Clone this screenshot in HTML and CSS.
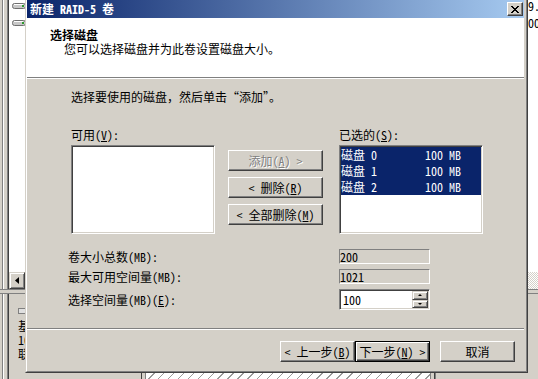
FILE: index.html
```html
<!DOCTYPE html>
<html lang="zh-CN">
<head>
<meta charset="utf-8">
<title>新建 RAID-5 卷</title>
<link rel="stylesheet" href="styles.css">
</head>
<body>
<div class="desk">
  <div class="bg-top">
    <div class="frame-left"></div>
    <div class="list">
      <div class="list-rows">
        <div class="row">
          <svg class="drive" viewBox="0 0 14 6" width="14" height="6"><rect x="0.5" y="0.5" width="13" height="5" rx="2" fill="#c8c8c8" stroke="#707070"/><rect x="2" y="1" width="9" height="1" fill="#fff"/><rect x="10" y="2" width="2" height="2" fill="#2e9a2e"/></svg>
          <span class="cell c1">9.76 GB</span>
        </div>
        <div class="row">
          <svg class="drive" viewBox="0 0 14 6" width="14" height="6"><rect x="0.5" y="0.5" width="13" height="5" rx="2" fill="#c8c8c8" stroke="#707070"/><rect x="2" y="1" width="9" height="1" fill="#fff"/><rect x="10" y="2" width="2" height="2" fill="#2e9a2e"/></svg>
          <span class="cell c2">100 %</span>
        </div>
      </div>
      <div class="hscroll">
        <div class="sb-btn"><svg width="4" height="7" viewBox="0 0 4 7"><path d="M4 0V7L0 3.5Z" fill="#000"/></svg></div>
        <div class="sb-track"></div>
      </div>
    </div>
  </div>
  <div class="splitter"></div>
  <div class="bg-bottom">
    <div class="frame-left"></div>
    <div class="disks">
      <div class="disk">
        <div class="disk-label">
          <svg class="disk-icon" viewBox="0 0 8 6" width="8" height="6"><rect x="0.5" y="0.5" width="7" height="5" fill="#e0e0e0" stroke="#808080"/></svg>
          <div class="dl-line">基本</div>
          <div class="dl-line">10.00 GB</div>
          <div class="dl-line">联机</div>
        </div>
        <div class="part hatch"></div>
        <div class="part rest"></div>
      </div>
    </div>
  </div>
</div>

<div class="dialog">
  <div class="dialog-inner">
    <div class="titlebar">
      <span class="title">新建 RAID-5 卷</span>
      <div class="close"><svg width="8" height="7" viewBox="0 0 8 7" shape-rendering="crispEdges"><path d="M0 0h2v1H0zM6 0h2v1H6zM1 1h2v1H1zM5 1h2v1H5zM2 2h4v1H2zM3 3h2v1H3zM2 4h4v1H2zM1 5h2v1H1zM5 5h2v1H5zM0 6h2v1H0zM6 6h2v1H6z" fill="#000"/></svg></div>
    </div>
    <div class="header">
      <div class="h-title">选择磁盘</div>
      <div class="h-sub">您可以选择磁盘并为此卷设置磁盘大小。</div>
    </div>
    <div class="sep"></div>
    <div class="body">
      <div class="instr">选择要使用的磁盘，然后单击“添加”。</div>
      <div class="pick">
        <div class="col-list">
          <div class="lbl">可用(<u>V</u>):</div>
          <div class="listbox"></div>
        </div>
        <div class="col-btns">
          <div class="btn mid disabled">添加(<u>A</u>) &gt;</div>
          <div class="btn mid">&lt; 删除(<u>R</u>)</div>
          <div class="btn mid">&lt; 全部删除(<u>M</u>)</div>
        </div>
        <div class="col-list sel">
          <div class="lbl">已选的(<u>S</u>):</div>
          <div class="listbox">
            <div class="item"><span>磁盘 0</span><span>100 MB</span></div>
            <div class="item"><span>磁盘 1</span><span>100 MB</span></div>
            <div class="item"><span>磁盘 2</span><span>100 MB</span></div>
          </div>
        </div>
      </div>
      <div class="sizes">
        <div class="slbl">卷大小总数(MB):</div>
        <div class="ro">200</div>
        <div class="slbl">最大可用空间量(MB):</div>
        <div class="ro">1021</div>
        <div class="slbl">选择空间量(MB)(<u>E</u>):</div>
        <div class="spin">
          <span class="spin-val">100</span>
          <div class="spin-btns">
            <div class="sbtn"><span class="tri up"></span></div>
            <div class="sbtn"><span class="tri down"></span></div>
          </div>
        </div>
      </div>
    </div>
    <div class="sep"></div>
    <div class="footer">
      <div class="btn wiz">&lt; 上一步(<u>B</u>)</div>
      <div class="btn wiz default">下一步(<u>N</u>) &gt;</div>
      <div class="btn wiz cancel">取消</div>
    </div>
  </div>
</div>
</body>
</html>
```

FILE: styles.css
```css
* { box-sizing: border-box; }
html, body { margin: 0; padding: 0; }
body {
  width: 538px;
  height: 379px;
  overflow: hidden;
  position: relative;
  background: #D4D0C8;
  font-family: "Noto Sans Mono CJK SC", "Noto Sans CJK SC", "Liberation Mono", monospace;
  font-size: 12px;
  line-height: 12px;
  color: #000;
}
u { text-decoration: underline; text-underline-offset: 1px; }

/* ---------- background window ---------- */
.desk { width: 538px; height: 379px; display: flex; flex-direction: column; }
.bg-top { height: 290px; display: flex; border-bottom: 1px solid #808080; flex: none; }
.frame-left {
  width: 9px; flex: none;
  background: linear-gradient(to right, #D4D0C8 0 2px, #808080 2px 3px, #fff 3px 4px, #D4D0C8 4px 7px, #808080 7px 8px, #404040 8px 9px);
}
.list { flex: 1; min-width: 0; display: flex; flex-direction: column; background: #fff; }
.list-rows { flex: 1; overflow: hidden; }
.row { display: flex; align-items: flex-start; height: 17px; white-space: nowrap; }
.drive { flex: none; margin: 3px 0 0 3px; }
.cell { flex: none; line-height: 12px; margin-top: 0; }
.c1 { margin-left: 502px; }
.c2 { margin-left: 496px; }
.hscroll { height: 17px; display: flex; flex: none; }
.sb-btn {
  width: 16px; height: 17px; flex: none;
  display: flex; align-items: center; justify-content: center;
  background: #D4D0C8;
  border: 1px solid; border-color: #D4D0C8 #404040 #404040 #D4D0C8;
  box-shadow: inset 1px 1px #fff, inset -1px -1px #808080;
}
.sb-track {
  flex: 1;
  background: conic-gradient(#D4D0C8 0 25%, #fff 0 50%, #D4D0C8 0 75%, #fff 0) 0 0 / 2px 2px;
}
.splitter { height: 3px; flex: none; }
.bg-bottom { flex: 1; display: flex; border-top: 1px solid #808080; min-height: 0; }
.disks { flex: 1; padding-top: 3px; overflow: hidden; }
.disk { display: flex; height: 110px; }
.disk-label { width: 132px; flex: none; padding: 11px 0 0 9px; }
.disk-icon { display: block; margin-bottom: 5px; }
.dl-line { line-height: 14px; white-space: nowrap; }
.part { height: 100%; }
.hatch {
  width: 294px; flex: none;
  border-left: 1px solid #404040; border-right: 1px solid #404040;
  box-shadow: inset 3px 0 #D4D0C8, inset -3px 0 #D4D0C8, inset 4px 0 #808080, inset -4px 0 #808080;
  background: repeating-linear-gradient(135deg, #fff 0 6px, #9a9a9a 6px 7px);
}
.rest { flex: 1; border-left: 1px solid #808080; }

/* ---------- dialog ---------- */
.dialog {
  position: absolute; left: 25px; top: 0;
  width: 503px; height: 373px;
  background: #D4D0C8;
  border-left: 1px solid #D4D0C8;
  border-right: 1px solid #404040;
  border-bottom: 1px solid #404040;
}
.dialog-inner {
  height: 100%;
  display: flex; flex-direction: column;
  border-left: 1px solid #fff;
  border-right: 1px solid #808080;
  border-bottom: 1px solid #808080;
  padding: 0 2px 2px 0;
}
.titlebar {
  height: 18px; flex: none;
  display: flex; align-items: center; justify-content: space-between;
  background: linear-gradient(to right, #0A246A, #A6CAF0);
  padding: 0 1px 0 3px;
}
.title { color: #fff; font-weight: bold; line-height: 18px; white-space: nowrap; }
.close {
  width: 16px; height: 14px;
  display: flex; align-items: center; justify-content: center;
  background: #D4D0C8;
  border: 1px solid; border-color: #fff #404040 #404040 #fff;
  box-shadow: inset -1px -1px #808080;
}
.header { height: 59px; flex: none; background: #fff; padding-top: 11px; }
.h-title { font-weight: bold; padding-left: 23px; line-height: 12px; }
.h-sub { padding-left: 37px; margin-top: 2px; line-height: 12px; }
.sep { height: 2px; flex: none; border-top: 1px solid #808080; border-bottom: 1px solid #fff; }

.body { flex: 1; padding: 12px 0 0 44px; display: flex; flex-direction: column; }
.instr { line-height: 12px; }
.pick { display: flex; margin-top: 26px; align-items: flex-start; }
.col-list { width: 144px; flex: none; display: flex; flex-direction: column; }
.col-list.sel { margin-left: 16px; }
.lbl { line-height: 12px; margin-bottom: 4px; white-space: nowrap; }
.listbox {
  height: 89px;
  background: #fff;
  border: 1px solid; border-color: #808080 #fff #fff #808080;
  padding: 1px;
  box-shadow: inset 1px 1px #404040, inset -1px -1px #D4D0C8;
}
.item {
  display: grid; grid-template-columns: 84px 1fr;
  height: 16px; line-height: 16px;
  background: #0A246A; color: #fff; white-space: nowrap;
}
.col-btns { width: 95px; flex: none; margin-left: 13px; padding-top: 21px; display: flex; flex-direction: column; gap: 6px; }

.btn {
  height: 21px;
  display: flex; align-items: center; justify-content: center;
  white-space: nowrap;
  background: #D4D0C8;
  border: 1px solid; border-color: #fff #404040 #404040 #fff;
  box-shadow: inset -1px -1px #808080;
  line-height: 12px;
}
.btn.mid { width: 95px; }
.btn.disabled { color: #808080; text-shadow: 1px 1px 0 #fff; }

.sizes {
  display: grid;
  grid-template-columns: 271px 91px;
  grid-template-rows: 15px 15px 21px;
  row-gap: 5px;
  margin: 15px 0 0 -3px;
  align-items: center;
}
.slbl { white-space: nowrap; line-height: 12px; }
.ro {
  height: 15px;
  border: 1px solid; border-color: #808080 #fff #fff #808080;
  padding-left: 0;
  line-height: 13px;
}
.spin {
  height: 21px;
  display: flex;
  background: #fff;
  border: 1px solid; border-color: #808080 #fff #fff #808080;
  padding: 1px;
  box-shadow: inset 1px 1px #404040, inset -1px -1px #D4D0C8;
}
.spin-val { flex: 1; padding-left: 2px; line-height: 17px; }
.spin-btns { width: 16px; display: flex; flex-direction: column; }
.sbtn {
  flex: 1;
  display: flex; align-items: center; justify-content: center;
  background: #D4D0C8;
  border: 1px solid; border-color: #D4D0C8 #404040 #404040 #D4D0C8;
  box-shadow: inset 1px 1px #fff, inset -1px -1px #808080;
}
.tri { width: 0; height: 0; border-left: 2px solid transparent; border-right: 2px solid transparent; }
.tri.up { border-bottom: 2px solid #000; }
.tri.down { border-top: 2px solid #000; }

.footer { height: 39px; flex: none; display: flex; justify-content: flex-end; align-items: flex-start; padding: 11px 9px 0 0; }
.btn.wiz { width: 75px; }
.btn.default {
  border: 1px solid #000;
  box-shadow: inset 1px 1px #fff, inset -1px -1px #404040, inset -2px -2px #808080;
}
.btn.cancel { margin-left: 10px; }
```
